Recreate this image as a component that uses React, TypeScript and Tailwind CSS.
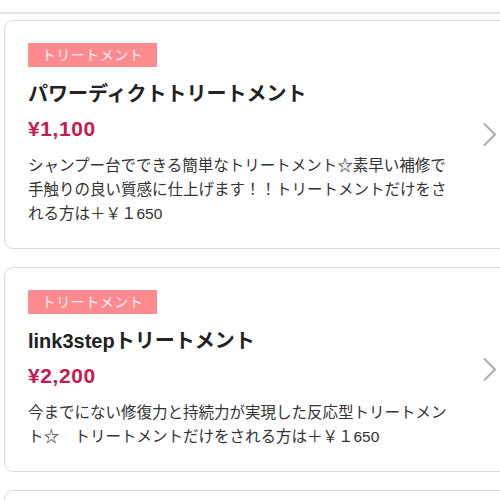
import React from 'react';

type Item = {
    tag: string;
    title: string;
    price: string;
    desc: string[];
};

const items: Item[] = [
    {
        tag: 'トリートメント',
        title: 'パワーディクトトリートメント',
        price: '¥1,100',
        desc: [
            'シャンプー台でできる簡単なトリートメント☆素早い補修で',
            '手触りの良い質感に仕上げます！！トリートメントだけをさ',
            'れる方は＋￥１650',
        ],
    },
    {
        tag: 'トリートメント',
        title: 'link3stepトリートメント',
        price: '¥2,200',
        desc: ['今までにない修復力と持続力が実現した反応型トリートメン', 'ト☆　トリートメントだけをされる方は＋￥１650'],
    },
];

const Chevron: React.FC = () => (
    <svg width="15" height="25" viewBox="0 0 15 25" fill="none" className="shrink-0">
        <path d="M2 1.5 L13 12.5 L2 23.5" stroke="#ababab" strokeWidth="2" />
    </svg>
);

const MenuCard: React.FC<{ item: Item }> = ({ item }) => (
    <div className="ml-[4px] w-[520px] rounded-[9px] border border-[#dcdcdc] bg-white pl-[23px] pt-[22px] pb-[22px] flex items-center">
        <div className="w-[426px] shrink-0">
            <div className="inline-block h-[24px] w-[129px] bg-[#ff8b91] text-center text-[14px] leading-[24px] text-[#fff0f1] tracking-[0.5px]">
                {item.tag}
            </div>
            <div className="mt-[13px] text-[20px] leading-[28px] font-bold text-[#222]">{item.title}</div>
            <div className="mt-[8px] text-[21px] leading-[26px] font-bold text-[#c51a50] tracking-[0.6px]">{item.price}</div>
            <p className="mt-[12px] text-[15.5px] leading-[24px] text-[#333] whitespace-nowrap">
                {item.desc.map((line, i) => (
                    <React.Fragment key={i}>
                        {i > 0 && <br />}
                        {line}
                    </React.Fragment>
                ))}
            </p>
        </div>
        <div className="ml-[28px]">
            <Chevron />
        </div>
    </div>
);

const App: React.FC = () => {
    return (
        <div
            className="w-[500px] h-[500px] overflow-hidden bg-white"
            style={{ fontFamily: '"Liberation Sans", "Noto Sans CJK JP", sans-serif' }}
        >
            <div className="h-[14px] border-b-2 border-[#e2e2e2]" />
            <div className="mt-[6px] flex flex-col gap-[18px]">
                {items.map((item, i) => (
                    <MenuCard key={i} item={item} />
                ))}
                {/* next card, only its top edge is in view */}
                <div className="ml-[4px] w-[520px] h-[200px] rounded-[9px] border border-[#dcdcdc] bg-white" />
            </div>
        </div>
    );
};

export default App;
